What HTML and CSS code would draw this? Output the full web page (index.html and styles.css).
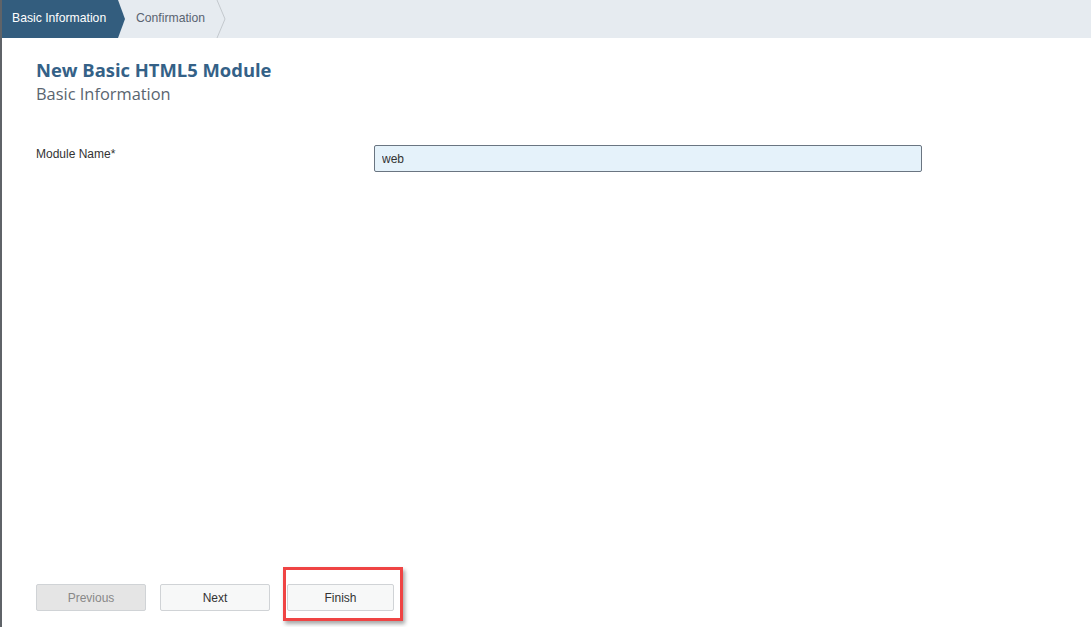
FILE: index.html
```html
<!DOCTYPE html>
<html lang="en">
<head>
    <meta charset="UTF-8">
    <title>New Basic HTML5 Module</title>
    <link rel="stylesheet" href="styles.css">
</head>
<body>

<div class="page">
    <div class="steps">
        <div class="step active">Basic Information</div>
        <div class="step next-step">
            <span>Confirmation</span>
            <svg class="chevron" width="10" height="38" viewBox="0 0 10 38">
                <polyline points="1,0 9,19 1,38" fill="none" stroke="#c3c8cd" stroke-width="1"/>
            </svg>
        </div>
    </div>

    <div class="content">
        <h1 class="title">New Basic HTML5 Module</h1>
        <h2 class="subtitle">Basic Information</h2>

        <div class="form-row">
            <label for="module-name">Module Name*</label>
            <input type="text" id="module-name" value="web">
        </div>
    </div>

    <div class="footer">
        <button class="btn disabled">Previous</button>
        <button class="btn">Next</button>
        <div class="highlight-wrap">
            <button class="btn">Finish</button>
            <span class="highlight"></span>
        </div>
    </div>
</div>

</body>
</html>
```

FILE: styles.css
```css
html, body {
    margin: 0;
    padding: 0;
    height: 100%;
}
body {
    font-family: Arial, "Liberation Sans", sans-serif;
    background-color: #fff;
}
.page {
    min-height: 100vh;
    box-sizing: border-box;
    border-left: 2px solid #5f6368;
    display: flex;
    flex-direction: column;
}
.steps {
    height: 38px;
    background-color: #e6ebf0;
    display: flex;
    align-items: stretch;
}
.step {
    font-size: 12.2px;
    display: flex;
    align-items: center;
    padding-bottom: 2px;
    box-sizing: border-box;
}
.step.active {
    width: 123px;
    padding-left: 10px;
    background-color: #335d7e;
    color: #fff;
    clip-path: polygon(0 0, calc(100% - 7px) 0, 100% 50%, calc(100% - 7px) 100%, 0 100%);
}
.step.next-step {
    color: #596370;
    padding-left: 11px;
    padding-bottom: 0;
}
.step.next-step span {
    padding-bottom: 2px;
}
.chevron {
    margin-left: 11px;
    display: block;
}
.content {
    flex: 1;
    padding: 0 34px;
}
.title {
    font-family: "Open Sans", sans-serif;
    font-size: 18.4px;
    font-weight: bold;
    color: #346187;
    margin: 20px 0 0 0;
    line-height: 24px;
}
.subtitle {
    font-family: "Open Sans", sans-serif;
    font-size: 16.4px;
    font-weight: normal;
    color: #5a6570;
    margin: 0;
    line-height: 23px;
}
.form-row {
    display: flex;
    align-items: flex-start;
    margin-top: 40px;
}
.form-row label {
    font-size: 12px;
    color: #333;
    width: 338px;
    padding-top: 2px;
}
.form-row input {
    width: 548px;
    height: 27px;
    box-sizing: border-box;
    border: 1px solid #6a7581;
    border-radius: 2px;
    background-color: #e5f2fa;
    padding: 0 7px;
    font-family: Arial, "Liberation Sans", sans-serif;
    font-size: 12px;
    color: #333;
    outline: none;
}
.footer {
    display: flex;
    padding: 0 34px 16px 34px;
    gap: 14px;
}
.btn {
    width: 110px;
    height: 27px;
    box-sizing: border-box;
    border: 1px solid #d0d3d6;
    border-radius: 2px;
    background-color: #f7f8f8;
    font-family: Arial, "Liberation Sans", sans-serif;
    font-size: 12px;
    color: #333;
    cursor: pointer;
}
.btn.disabled {
    background-color: #e5e5e5;
    color: #888;
    cursor: default;
}
.highlight-wrap {
    position: relative;
    margin-left: 3px;
}
.highlight-wrap .btn {
    width: 107px;
}
.highlight {
    position: absolute;
    left: -4px;
    top: -17px;
    width: 120px;
    height: 54px;
    box-sizing: border-box;
    border: 3px solid #ef4444;
    box-shadow: 2px 3px 4px rgba(0, 0, 0, 0.35);
    pointer-events: none;
}
```
